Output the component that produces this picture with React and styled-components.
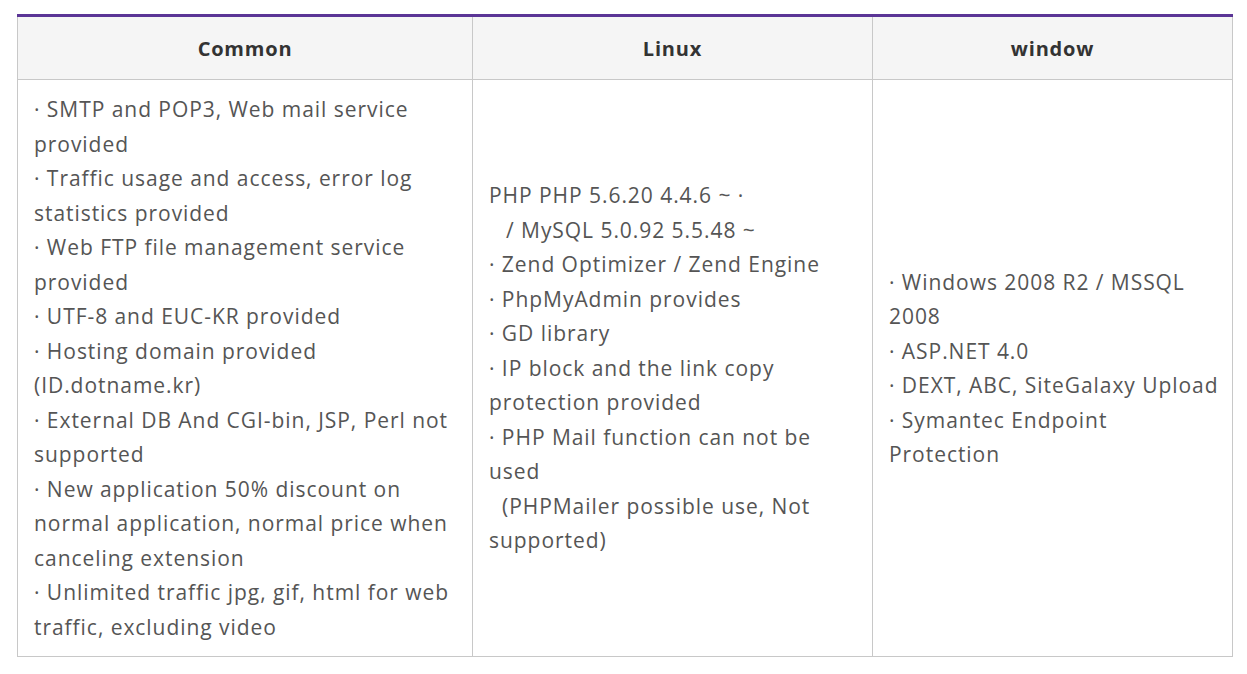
import React from 'react'
import styled, { createGlobalStyle } from 'styled-components'

const GlobalStyle = createGlobalStyle`
  body {
    margin: 0;
    background: #ffffff;
    font-family: "Open Sans", "Liberation Sans", sans-serif;
  }
`

const Wrapper = styled.div`
  padding: 14px 14px 0 17px;
`

const Table = styled.table`
  width: 1215px;
  border-collapse: collapse;
  table-layout: fixed;
  border-top: 3px solid #5b3596;
`

const HeadCell = styled.th`
  height: 62px;
  background: #f5f5f5;
  border: 1px solid #c8c8c8;
  border-top: none;
  font-size: 20px;
  font-weight: 700;
  letter-spacing: 0.8px;
  color: #333333;
  text-align: center;
  vertical-align: middle;
  padding: 0;
`

const Col = styled.col`
  width: ${(p) => p.w}px;
`

const BodyCell = styled.td`
  border: 1px solid #c8c8c8;
  padding: 12px 16px;
  vertical-align: middle;
  font-size: 21px;
  line-height: 34.5px;
  color: #555555;
  letter-spacing: 0.95px;
  white-space: nowrap;
`

const Line = styled.div`
  padding-left: ${(p) => p.indent || 0}px;
`

const common = [
  '· SMTP and POP3, Web mail service',
  'provided',
  '· Traffic usage and access, error log',
  'statistics provided',
  '· Web FTP file management service',
  'provided',
  '· UTF-8 and EUC-KR provided',
  '· Hosting domain provided',
  '(ID.dotname.kr)',
  '· External DB And CGI-bin, JSP, Perl not',
  'supported',
  '· New application 50% discount on',
  'normal application, normal price when',
  'canceling extension',
  '· Unlimited traffic jpg, gif, html for web',
  'traffic, excluding video',
]

const linux = [
  ['PHP PHP 5.6.20 4.4.6 ~ ·', 0],
  ['/ MySQL 5.0.92 5.5.48 ~', 17],
  ['· Zend Optimizer / Zend Engine', 0],
  ['· PhpMyAdmin provides', 0],
  ['· GD library', 0],
  ['· IP block and the link copy', 0],
  ['protection provided', 0],
  ['· PHP Mail function can not be', 0],
  ['used', 0],
  ['(PHPMailer possible use, Not', 13],
  ['supported)', 0],
]

const windows = [
  '· Windows 2008 R2 / MSSQL',
  '2008',
  '· ASP.NET 4.0',
  '· DEXT, ABC, SiteGalaxy Upload',
  '· Symantec Endpoint',
  'Protection',
]

export default function App() {
  return (
    <Wrapper>
      <GlobalStyle />
      <Table>
        <colgroup>
          <Col w={455} />
          <Col w={400} />
          <Col w={360} />
        </colgroup>
        <thead>
          <tr>
            <HeadCell>Common</HeadCell>
            <HeadCell>Linux</HeadCell>
            <HeadCell>window</HeadCell>
          </tr>
        </thead>
        <tbody>
          <tr>
            <BodyCell>
              {common.map((t, i) => <Line key={i}>{t}</Line>)}
            </BodyCell>
            <BodyCell>
              {linux.map(([t, ind], i) => <Line key={i} indent={ind}>{t}</Line>)}
            </BodyCell>
            <BodyCell>
              {windows.map((t, i) => <Line key={i}>{t}</Line>)}
            </BodyCell>
          </tr>
        </tbody>
      </Table>
    </Wrapper>
  )
}
